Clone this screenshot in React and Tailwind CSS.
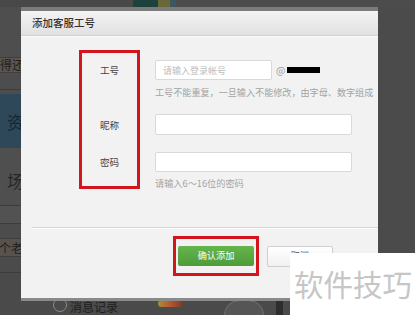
export default function App() {
  const font = "font-['Noto_Sans_CJK_SC','Noto_Sans',sans-serif]";
  return (
    <div className={`relative w-[415px] h-[315px] overflow-hidden bg-[#4b4b4b] ${font}`}>
      {/* page behind the overlay */}
      <div className="flex h-full flex-col">
        <div className="flex h-[7px] shrink-0">
          <div className="w-[133px] bg-[#484848]" />
          <div className="w-[25px] bg-[#1d423d]" />
          <div className="w-[12px] bg-[#6a6838]" />
          <div className="w-[6px] bg-[#3e5661]" />
          <div className="flex-1 bg-[#4c4c4c]" />
        </div>
        <div className="flex min-h-0 flex-1">
          <div className="flex w-[21px] flex-col overflow-hidden">
            <div className="h-[50px] bg-[#4e4e4e]" />
            <div className="flex h-[16px] items-center justify-end border-y border-[#3e3e3e] bg-[#5b5550]">
              <span className="whitespace-nowrap text-[12px] leading-none text-[#1d1d1d] -mr-[3px]">得还</span>
            </div>
            <div className="h-[16px] bg-[#4d4d4d]" />
            <div className="h-[1px] bg-[#3c3c3c]" />
            <div className="h-[4px] bg-[#4d4d4d]" />
            <div className="flex h-[54px] items-center justify-end bg-[#2e4859]">
              <span className="whitespace-nowrap text-[17px] leading-none text-[#17252f] -mr-[3px]">资</span>
            </div>
            <div className="flex h-[57px] items-center justify-end bg-[#4f4f4f]">
              <span className="whitespace-nowrap text-[17px] leading-none text-[#262626] -mr-[3px] mt-[8px]">场</span>
            </div>
            <div className="h-[1px] bg-[#3c3c3c]" />
            <div className="h-[17px] bg-[#525252]" />
            <div className="h-[1px] bg-[#3c3c3c]" />
            <div className="h-[14px] bg-[#4c4c4c]" />
            <div className="flex h-[19px] items-center justify-end border-y border-[#3e3e3e] bg-[#58524e]">
              <span className="whitespace-nowrap text-[12px] leading-none text-[#1d1d1d] -mr-[2px]">个老</span>
            </div>
            <div className="h-[15px] bg-[#4b4b4b]" />
            <div className="h-[1px] bg-[#3c3c3c]" />
            <div className="flex-1 bg-[#4a4a4a]" />
          </div>
          <div className="flex-1" />
        </div>
        <div className="flex h-[20px] shrink-0 items-start bg-[#4a4a4a]">
          <div className="ml-[53px] mt-[3px] h-[14px] w-[14px] rounded-full border border-[#8a8a8a]" />
          <span className="ml-[3px] mt-[3px] whitespace-nowrap text-[12px] leading-[18px] text-[#1e1e1e]">消息记录</span>
          <div className="ml-[40px] mt-[5px] h-[7px] w-[26px] rounded-full bg-gradient-to-r from-[#a78a3a] via-[#b8522e] to-[#6d3a2a]" />
          <div className="ml-[40px] mt-[5px] h-[30px] w-[40px] rounded-full border border-[#707070] bg-[#555]" />
          <div className="ml-[12px] h-full w-[7px] bg-[#2d2d2d]" />
        </div>
      </div>

      {/* dialog */}
      <div className="absolute left-[21px] top-[7px] flex h-[294px] w-[357px] flex-col overflow-hidden border-t-4 border-b-[3px] border-t-[#7b7b7b] border-b-[#8a8a8a] bg-[#f2f2f2]">
        <div className="flex h-[25px] shrink-0 items-center border-b border-[#d2d2d2] bg-gradient-to-b from-[#f3f3f3] to-[#e1e1e1] pl-[11px] shadow-[0_1px_0_#fafafa]">
          <span className="text-[10.5px] font-medium leading-none text-[#333]">添加客服工号</span>
        </div>

        <div className="flex items-start">
          {/* label column */}
          <div className="ml-[58px] mt-[14px] flex h-[139px] w-[61px] shrink-0 flex-col items-center border-[3px] border-[#d3161d]">
            <span className="mt-[10px] text-[9.6px] leading-[14px] text-[#444]">工号</span>
            <span className="mt-[41px] text-[9.6px] leading-[14px] text-[#444]">昵称</span>
            <span className="mt-[23px] text-[9.6px] leading-[14px] text-[#444]">密码</span>
          </div>
          {/* field column */}
          <div className="ml-[15px] mt-[24px] flex min-w-0 flex-1 flex-col">
            <div className="flex items-center">
              <div className="flex h-[20px] w-[117px] items-center rounded-[2px] border border-[#d9d9d9] bg-white pl-[7px]">
                <span className="whitespace-nowrap text-[9px] leading-none text-[#bdbdbd]">请输入登录帐号</span>
              </div>
              <span className="ml-[4px] text-[10px] leading-none text-[#9a9a9a]">@</span>
              <div className="ml-[2px] h-[6px] w-[33px] bg-black" />
            </div>
            <span className="mt-[6px] whitespace-nowrap text-[9.1px] leading-[12px] text-[#a3a3a3]">
              工号不能重复，一旦输入不能修改，由字母、数字组成
            </span>
            <div className="mt-[16px] h-[21px] w-[197px] rounded-[2px] border border-[#d9d9d9] bg-white" />
            <div className="mt-[17px] h-[20px] w-[197px] rounded-[2px] border border-[#d9d9d9] bg-white" />
            <span className="mt-[5px] whitespace-nowrap text-[9.2px] leading-[12px] text-[#a3a3a3]">请输入6～16位的密码</span>
          </div>
        </div>

        <div className="ml-[11px] mt-[38px] h-[1px] shrink-0 bg-[#d6d6d6] shadow-[0_1px_0_#fcfcfc]" />

        <div className="ml-[152px] mt-[8px] flex items-center">
          <div className="flex h-[40px] w-[86px] items-center justify-center border-[3px] border-[#d3161d]">
            <div className="flex h-[20px] w-[76px] items-center justify-center rounded-[2px] bg-gradient-to-b from-[#66b44c] to-[#4e9c39]">
              <span className="text-[9.2px] leading-none text-white">确认添加</span>
            </div>
          </div>
          <div className="ml-[8px] flex h-[21px] w-[66px] items-center justify-center rounded-[2px] border border-[#cfcfcf] bg-gradient-to-b from-white to-[#f1f1f1]">
            <span className="text-[9.2px] leading-none text-[#555]">取消</span>
          </div>
        </div>
      </div>

      {/* watermark */}
      <div className="absolute left-[290px] top-[253px] flex h-[62px] w-[125px] items-center bg-white pl-[4px]">
        <span className="whitespace-nowrap text-[29.5px] leading-none text-[#c6c6c6]">软件技巧</span>
      </div>
    </div>
  );
}
